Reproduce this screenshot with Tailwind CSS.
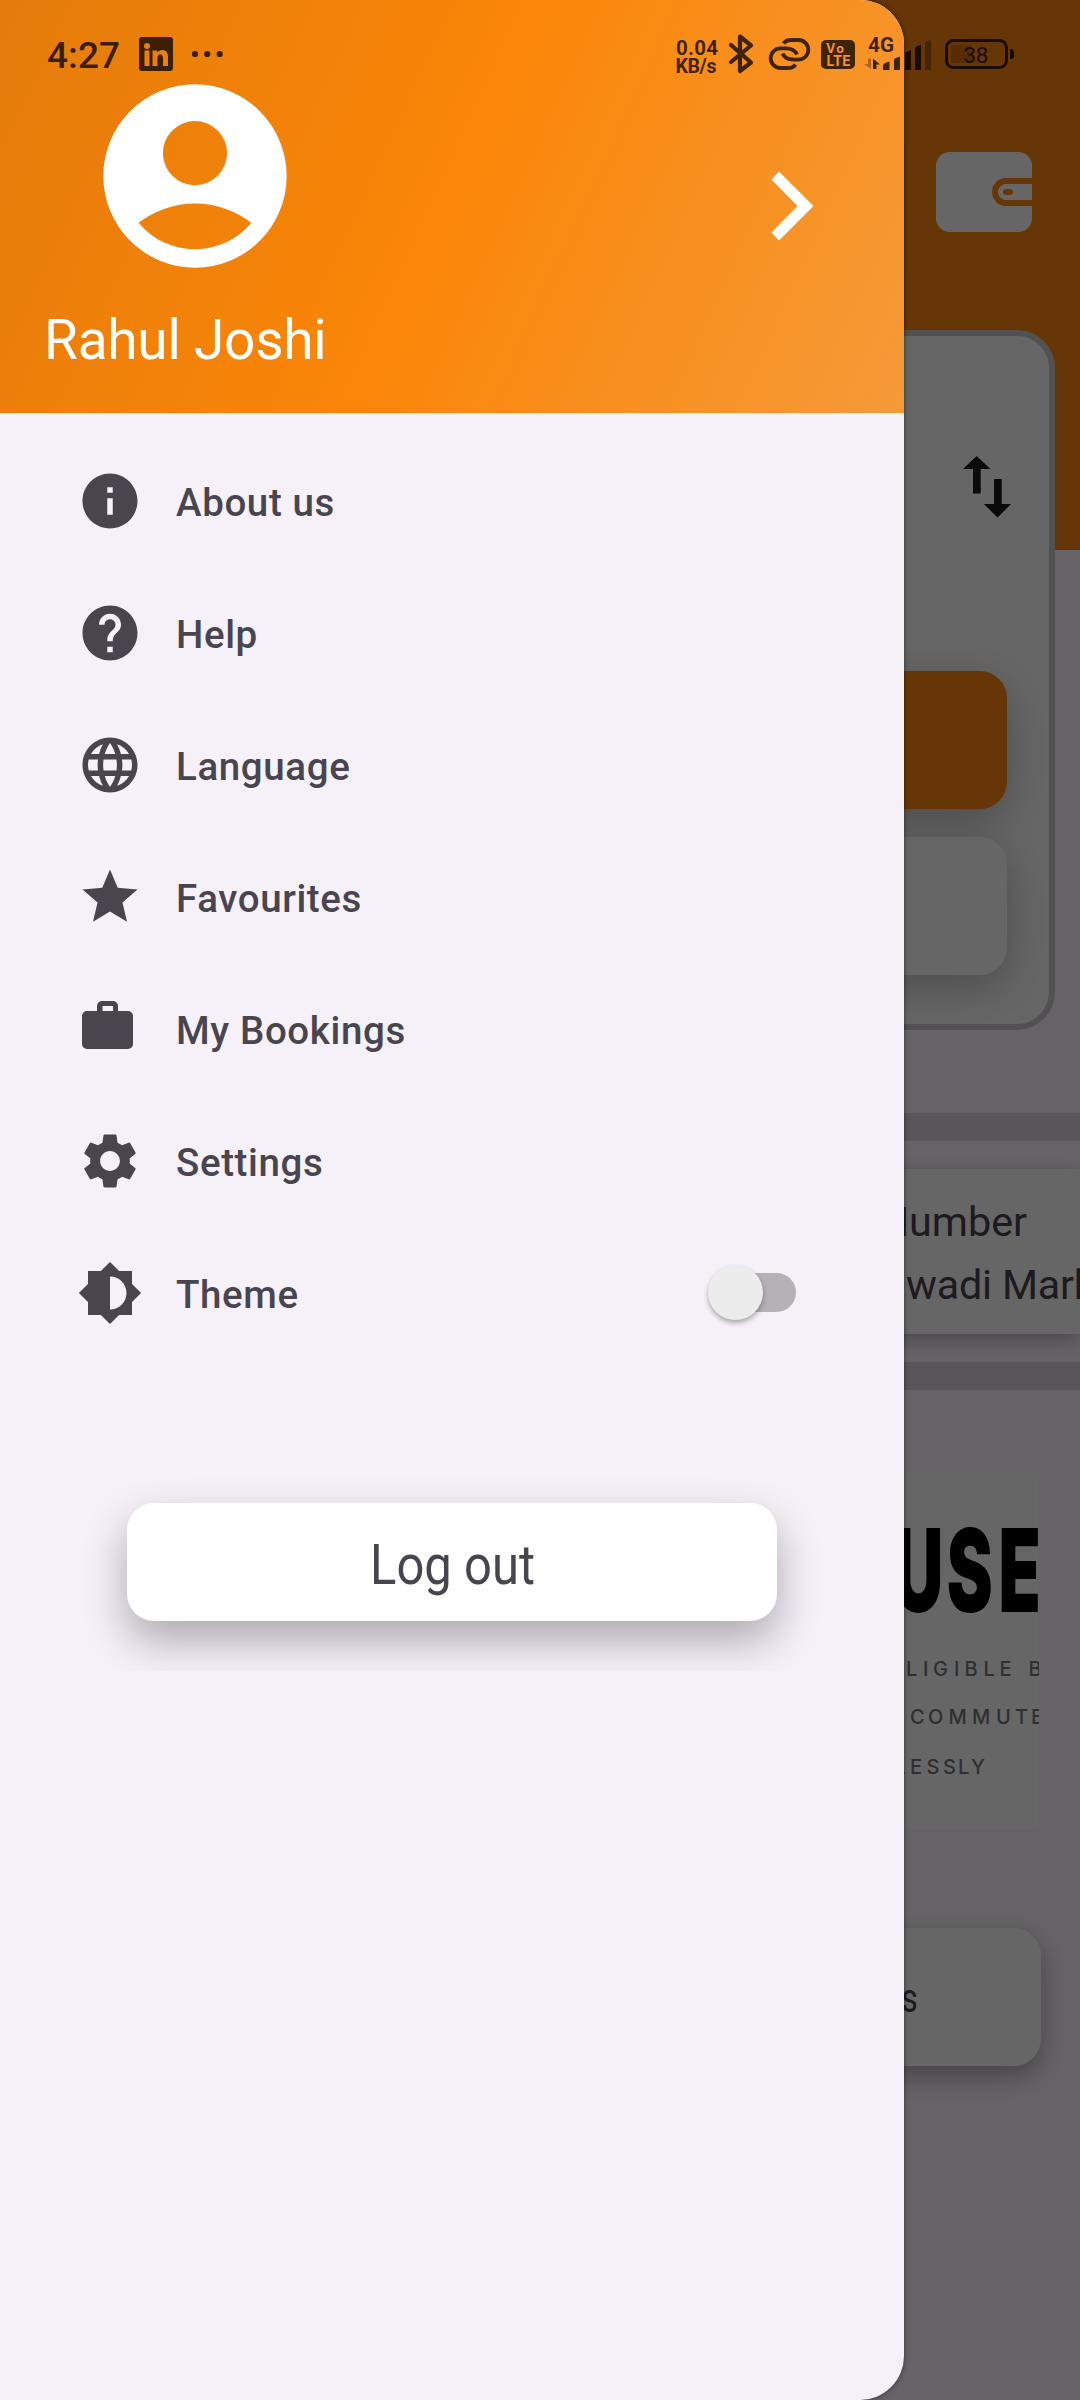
<!DOCTYPE html>
<html lang="en">
<head>
<meta charset="utf-8">
<title>Navigation drawer</title>
<script src="https://cdn.jsdelivr.net/npm/@tailwindcss/browser@4"></script>
</head>
<body class="bg-[#fff8ff] font-[Roboto,sans-serif]">
<div class="relative w-[1080px] h-[2400px] overflow-hidden">

  <!-- Home screen behind the drawer -->
  <main class="flex flex-col w-full h-full bg-[#fff8ff]">
    <header class="h-[550px] bg-[#ff870f] pt-[152px] pr-12">
      <svg class="ml-auto w-24 h-20" viewBox="0 0 96 80">
        <rect width="96" height="80" rx="14" fill="#fff"/>
        <path d="M96 26H70a14 14 0 0 0 0 28H96V48H70a8 8 0 0 1 0-16H96Z" fill="#ff870f"/>
        <rect x="67" y="37" width="10" height="6" rx="3" fill="#ff870f"/>
      </svg>
    </header>
    <section class="-mt-[220px] h-[700px] w-[1030px] ml-[25px] shrink-0 bg-white border-[6px] border-[#cbcbcb] rounded-[38px] pr-[42px] flex flex-col">
      <svg class="ml-auto mt-[120px] w-12 h-[62px] -mr-1" viewBox="0 0 48 62" fill="#191919">
        <path d="M13.700 0 27.400 13H17.700V37.500H10V13H0ZM31 23H38.700V48H48L34.500 61.500 21 48H31Z"/>
      </svg>
      <div class="mt-[153px] h-[138px] shrink-0 rounded-[27px] bg-[#ff870f] shadow-[0_12px_40px_rgba(0,0,0,0.26)]"></div>
      <div class="mt-7 h-[138px] shrink-0 rounded-[27px] bg-white shadow-[0_12px_40px_rgba(0,0,0,0.26)]"></div>
    </section>
    <div class="mt-[83px] h-7 shrink-0 bg-[#dcd7de]"></div>
    <section class="my-7 h-[165px] shrink-0 bg-white shadow-[0_6px_18px_rgba(0,0,0,0.28)] flex flex-col pt-[22px] text-[41.250px] leading-[63px] text-[#49454e] whitespace-nowrap overflow-visible">
      <p class="text-right pr-[53px]">Bus Number</p>
      <p class="pl-[906px] w-[1080px] tracking-[-0.200px] overflow-hidden">wadi Market</p>
    </section>
    <div class="h-7 shrink-0 bg-[#dcd7de]"></div>
    <section class="mt-[83px] ml-[41px] w-[998px] h-[357px] shrink-0 bg-white overflow-hidden">
      <svg class="w-full h-full" viewBox="41 1473 998 357">
        <text transform="scale(.6 1)" x="1489 1578 1664" y="1612" font-family="Inter, sans-serif" font-weight="900" font-size="115">USE</text>
        <g font-family="Inter, sans-serif" font-weight="500" font-size="20" fill="#777">
          <text x="906 923 933 954 964.500 983.500 999.500 1015 1028.500" y="1675.500">LIGIBLE B</text>
          <text x="910 928 948.500 972 996 1015 1031" y="1724">COMMUTE</text>
          <text x="894 910 926.500 943 958 971" y="1774">LESSLY</text>
        </g>
      </svg>
    </section>
    <div class="mt-[98px] mx-[39px] h-[138px] shrink-0 rounded-[27px] bg-white shadow-[0_10px_26px_rgba(0,0,0,0.32)] text-right pr-[123px] text-[40px] leading-[141px] text-[#49454e]"><span class="inline-block scale-x-[0.800] origin-right">Services</span></div>
  </main>
  <div class="absolute inset-0 bg-black/60"></div>

  <!-- Drawer -->
  <aside class="absolute left-0 top-0 w-[904px] h-[2400px] rounded-r-[44px] overflow-hidden bg-[#f6f1f9] shadow-[0_0_5px_rgba(0,0,0,0.5)] flex flex-col">
    <header class="h-[413px] shrink-0 bg-[linear-gradient(114.600deg,#e47b0b_0%,#fb8608_49%,#f59a38_100%)] flex text-white">
      <div class="flex flex-col pl-[44px] pt-[66px] w-[500px]">
        <svg class="w-[220px] h-[220px] ml-[41px]" viewBox="0 0 24 24" fill="#fff"><path fill-rule="evenodd" d="M12 2A10 10 0 1 0 12 22A10 10 0 1 0 12 2ZM12 6A3.500 3.500 0 1 1 12 13A3.500 3.500 0 1 1 12 6ZM5.850 17.100Q7.125 16.125 8.700 15.562T12 15Q13.725 15 15.300 15.562T18.150 17.100A8 8 0 0 1 5.850 17.100Z"/></svg>
        <p class="text-[55px] leading-[64px] mt-[22px] tracking-[-0.250px]">Rahul Joshi</p>
      </div>
      <svg class="ml-auto mr-[90px] mt-[171px] w-[43px] h-[70px]" viewBox="0 0 43 70" fill="#fff"><path d="M8 .500 42.500 35 8 69.500 .500 61.500 26.500 35 .500 8.500Z"/></svg>
    </header>
    <nav class="pt-[22px] text-[38.500px] font-medium text-[#49454e] tracking-[0.620px]">
      <a class="flex items-center h-[132px] pl-[77px] gap-[33px]"><svg class="w-[66px] h-[66px]" viewBox="0 0 24 24" fill="currentColor"><path d="M12 2C6.480 2 2 6.480 2 12s4.480 10 10 10 10-4.480 10-10S17.520 2 12 2zm1 15h-2v-6h2v6zm0-8h-2V7h2v2z"/></svg><span class="pt-[3px]">About us</span></a>
      <a class="flex items-center h-[132px] pl-[77px] gap-[33px]"><svg class="w-[66px] h-[66px]" viewBox="0 0 24 24" fill="currentColor"><path d="M12 2C6.480 2 2 6.480 2 12s4.480 10 10 10 10-4.480 10-10S17.520 2 12 2zm1 17h-2v-2h2v2zm2.070-7.750l-.9.920C13.450 12.900 13 13.500 13 15h-2v-.5c0-1.100.45-2.100 1.170-2.830l1.240-1.260c.37-.36.59-.86.59-1.410 0-1.100-.9-2-2-2s-2 .9-2 2H8c0-2.210 1.790-4 4-4s4 1.790 4 4c0 .88-.36 1.680-.93 2.250z"/></svg><span class="pt-[3px]">Help</span></a>
      <a class="flex items-center h-[132px] pl-[77px] gap-[33px]"><svg class="w-[66px] h-[66px]" viewBox="0 0 24 24" fill="currentColor"><path d="M11.990 2C6.470 2 2 6.480 2 12s4.470 10 9.990 10C17.520 22 22 17.520 22 12S17.520 2 11.990 2zm6.930 6h-2.950c-.32-1.250-.78-2.450-1.380-3.560 1.840.63 3.370 1.910 4.330 3.560zM12 4.040c.83 1.200 1.480 2.530 1.910 3.960h-3.820c.43-1.430 1.080-2.760 1.910-3.960zM4.260 14C4.100 13.360 4 12.690 4 12s.1-1.360.26-2h3.380c-.08.660-.14 1.320-.14 2 0 .680.060 1.340.14 2H4.260zm.82 2h2.950c.32 1.250.78 2.450 1.380 3.560-1.840-.63-3.370-1.900-4.330-3.560zm2.950-8H5.080c.96-1.660 2.490-2.930 4.330-3.560C8.810 5.550 8.350 6.750 8.030 8zM12 19.960c-.83-1.200-1.480-2.530-1.910-3.960h3.820c-.43 1.430-1.080 2.760-1.910 3.960zM14.340 14H9.660c-.09-.66-.16-1.320-.16-2 0-.68.070-1.350.16-2h4.680c.09.650.16 1.320.16 2 0 .680-.07 1.340-.16 2zm.25 5.560c.6-1.110 1.060-2.310 1.380-3.560h2.950c-.96 1.650-2.490 2.930-4.330 3.560zM16.360 14c.08-.66.14-1.320.14-2 0-.68-.06-1.340-.14-2h3.380c.16.640.26 1.310.26 2s-.1 1.360-.26 2h-3.380z"/></svg><span class="pt-[3px]">Language</span></a>
      <a class="flex items-center h-[132px] pl-[77px] gap-[33px]"><svg class="w-[66px] h-[66px]" viewBox="0 0 24 24" fill="currentColor"><path d="M12 17.270 18.180 21l-1.640-7.030L22 9.240l-7.190-.61L12 2 9.190 8.630 2 9.240l5.460 4.730L5.820 21z"/></svg><span class="pt-[3px]">Favourites</span></a>
      <a class="flex items-center h-[132px] pl-[77px] gap-[33px]"><svg class="w-[66px] h-[66px]" viewBox="0 0 66 66" fill="currentColor"><path fill-rule="evenodd" d="M20 15V10a5 5 0 0 1 5-5H36a5 5 0 0 1 5 5V15H51a5 5 0 0 1 5 5V48a5 5 0 0 1-5 5H10a5 5 0 0 1-5-5V20a5 5 0 0 1 5-5ZM25.500 10V15H36V10Z"/></svg><span class="pt-[3px]">My Bookings</span></a>
      <a class="flex items-center h-[132px] pl-[77px] gap-[33px]"><svg class="w-[66px] h-[66px]" viewBox="0 0 24 24" fill="currentColor"><path d="M19.140 12.940c.04-.3.060-.61.060-.94 0-.32-.02-.64-.07-.94l2.030-1.580c.18-.14.230-.41.120-.61l-1.920-3.320c-.12-.22-.37-.29-.59-.22l-2.390.96c-.5-.38-1.030-.7-1.620-.94l-.36-2.540c-.04-.24-.24-.41-.48-.41h-3.840c-.24 0-.43.170-.47.410l-.36 2.540c-.59.240-1.130.570-1.620.940l-2.390-.96c-.22-.08-.47 0-.59.220L2.740 8.870c-.12.210-.08.470.120.610l2.030 1.580c-.05.300-.09.630-.09.940s.02.640.070.940l-2.030 1.580c-.18.140-.23.410-.12.610l1.920 3.320c.12.220.370.290.590.220l2.390-.96c.5.380 1.030.700 1.620.940l.36 2.540c.05.240.240.410.480.410h3.840c.24 0 .44-.17.470-.41l.36-2.540c.59-.24 1.130-.56 1.620-.94l2.390.96c.22.080.470 0 .59-.22l1.920-3.320c.12-.22.070-.47-.12-.61l-2.010-1.580zM12 15.600c-1.980 0-3.600-1.620-3.600-3.600s1.620-3.600 3.600-3.600 3.600 1.620 3.600 3.600-1.620 3.600-3.600 3.600z"/></svg><span class="pt-[3px]">Settings</span></a>
      <a class="flex items-center h-[132px] pl-[77px] gap-[33px]"><svg class="w-[66px] h-[66px]" viewBox="0 0 24 24" fill="currentColor"><path d="M20 15.310 23.310 12 20 8.690V4h-4.690L12 .69 8.690 4H4v4.690L.69 12 4 15.310V20h4.690L12 23.310 15.310 20H20v-4.690zM12 18V6c3.310 0 6 2.690 6 6s-2.690 6-6 6z"/></svg><span class="pt-[3px]">Theme</span>
        <span class="ml-auto mr-[108px] mb-[2px] w-[88px] h-14 flex items-center"><span class="size-[55px] shrink-0 rounded-full bg-[#ececec] shadow-[0_3px_5px_rgba(0,0,0,0.3)] z-10"></span><span class="w-[60px] shrink-0 -ml-[27px] h-[39px] rounded-full bg-[#b6b1b7]"></span></span></a>
    </nav>
    <div class="h-[312px] shrink-0 overflow-hidden pt-[144px]">
      <button class="block ml-[127px] w-[650px] h-[118px] rounded-[27px] bg-white text-[#49454e] text-[55px] leading-[124px] shadow-[0_20px_44px_rgba(0,0,0,0.3)]"><span class="inline-block pl-[2px] scale-x-[0.890]">Log out</span></button>
    </div>
  </aside>

  <!-- System status bar -->
  <div class="absolute inset-x-0 top-0 h-[84px] text-black/75">
    <svg class="w-[1080px] h-[84px]" viewBox="0 0 1080 84" fill="currentColor" font-family="Roboto, sans-serif">
      <text x="47" y="68" font-size="37" font-weight="500" textLength="73">4:27</text>
      <path fill-rule="evenodd" d="M142 37H170a3 3 0 0 1 3 3V68a3 3 0 0 1-3 3H142a3 3 0 0 1-3-3V40a3 3 0 0 1 3-3ZM144.500 50.500V66H149.500V50.500ZM147 43A3 3 0 1 0 147 49A3 3 0 1 0 147 43ZM152.500 50.500V66H157.500V58C157.500 53 163 53 163 58V66H168V56.500C168 49 160 48.500 157.300 52.500V50.500Z"/>
      <circle cx="195" cy="54" r="3.100"/><circle cx="207.200" cy="54" r="3.100"/><circle cx="219.700" cy="54" r="3.100"/>
      <g font-weight="700"><text x="676" y="55" font-size="20.500" textLength="42">0.04</text><text x="675.500" y="73" font-size="19.500" textLength="41">KB/s</text><text x="868" y="52" font-size="20" textLength="26" lengthAdjust="spacingAndGlyphs">4G</text></g>
      <path d="M731 45 751 62.500 740 71V36.500L751 45.500 731 62" fill="none" stroke="currentColor" stroke-width="4.200" stroke-linecap="round" stroke-linejoin="round"/>
      <path d="M783.500 43.500Q786 40 791 40H798.500A9.800 9.800 0 0 1 798.500 59.600H794Q785 59.600 782.500 53.500M795.500 64.500Q793.500 68 788 68H780.500A9.800 9.800 0 0 1 780.500 48.400H786Q794 48.400 797 54.500" fill="none" stroke="currentColor" stroke-width="3.800"/>
      <rect x="821" y="40" width="34" height="29" rx="5"/>
      <g fill="#f7922a" font-weight="700" font-family="Inter, sans-serif"><text x="826" y="53" font-size="12.500" textLength="18">Vo</text><text x="826.500" y="66" font-size="14" textLength="24" lengthAdjust="spacingAndGlyphs">LTE</text></g>
      <path opacity=".4" d="M868 58.500H871V69L864 64H868Z"/><path d="M873 69V58.500L880 64.500H876.500V69Z"/>
      <path d="M883 70V66Q883 64 885 63L889.500 61.500V70ZM894 70V60Q894 58.500 896 58L900 56.500V70ZM905 70V54Q905 52 907 51.500L911 50V70ZM915 70V49Q915 47 917 46L921 45V70Z"/>
      <path opacity=".4" d="M925 70V44Q925 42 927 41L931 40V70Z"/>
      <rect x="946.500" y="40.500" width="60" height="27" rx="7" fill="none" stroke="currentColor" stroke-width="3"/>
      <rect x="951" y="45" width="21" height="18" rx="3" opacity=".2"/>
      <path d="M1010 49H1012Q1014 49.500 1014 52V56Q1014 58.500 1012 59H1010Z"/>
      <text x="963.500" y="63" font-size="22.500" textLength="25">38</text>
    </svg>
  </div>
</div>
</body>
</html>
